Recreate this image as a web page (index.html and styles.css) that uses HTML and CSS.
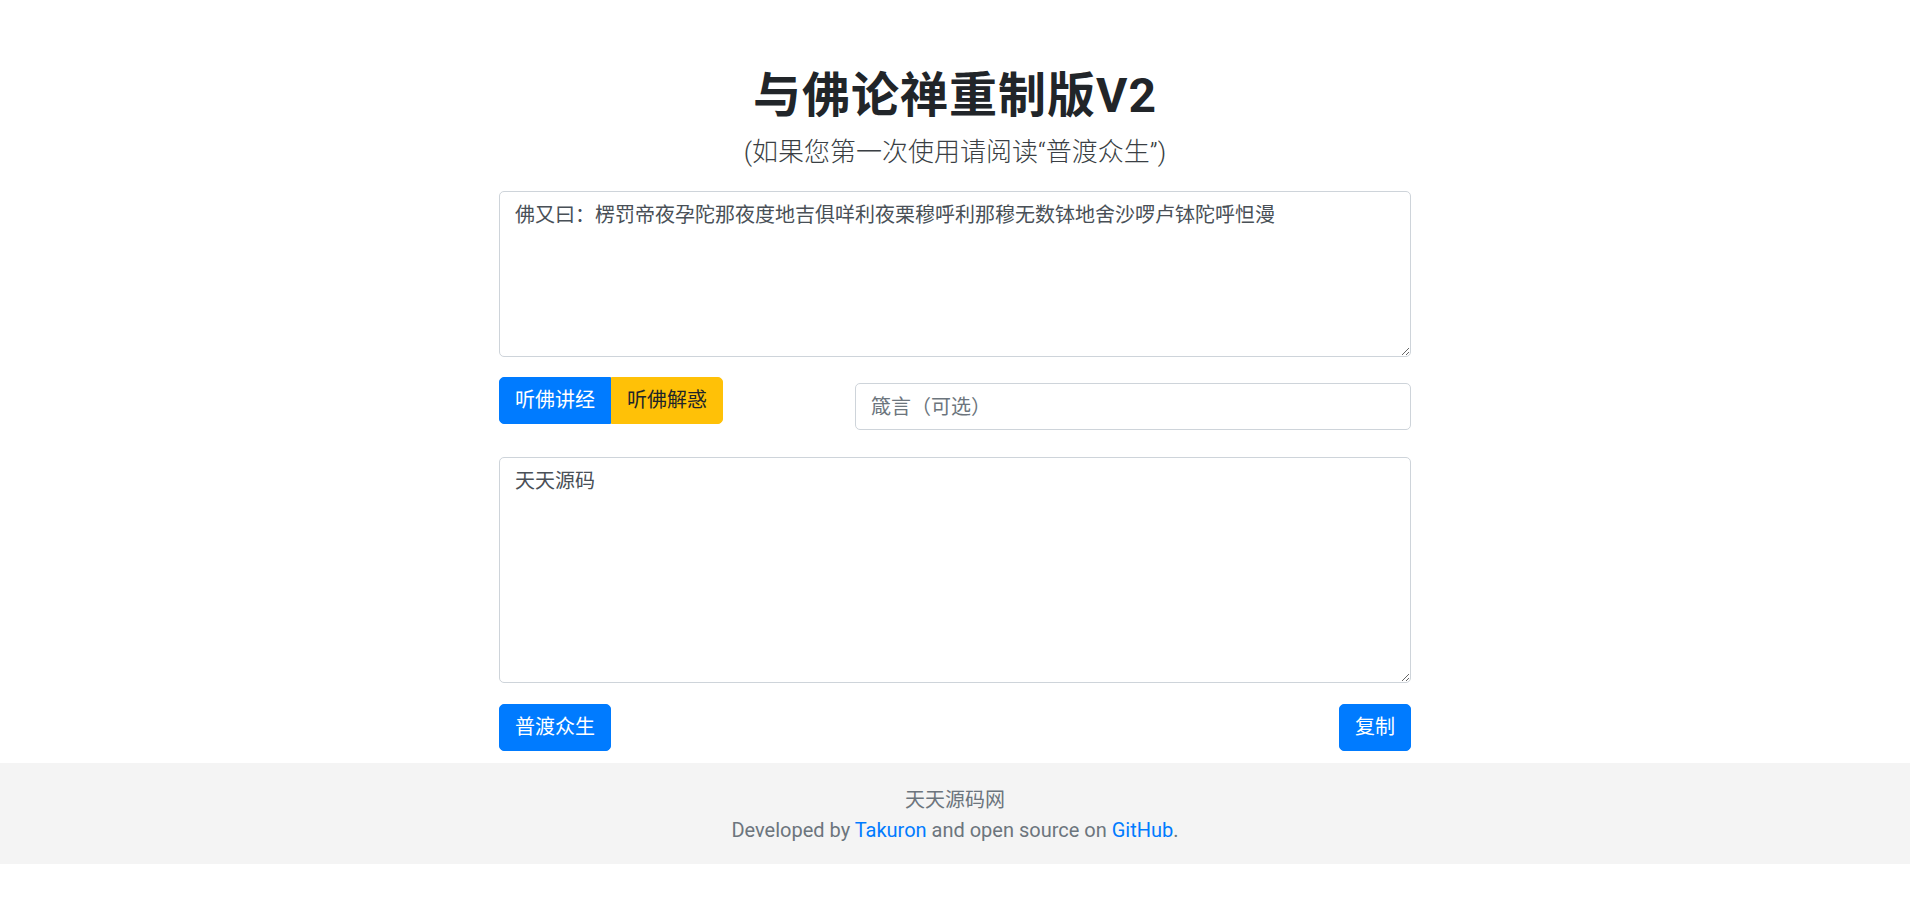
FILE: index.html
```html
<!DOCTYPE html>
<html lang="zh-CN">
<head>
<meta charset="utf-8">
<title>与佛论禅重制版V2</title>
<link rel="stylesheet" href="styles.css">
</head>
<body>
<main class="container">
  <h1 class="title">与佛论禅重制版V2</h1>
  <p class="lead">(如果您第一次使用请阅读“普渡众生”)</p>
  <textarea class="field field-top">佛又曰：楞罚帝夜孕陀那夜度地吉俱咩利夜栗穆呼利那穆无数钵地舍沙啰卢钵陀呼怛漫</textarea>
  <div class="mode-row">
    <div class="btn-group">
      <button class="btn btn-primary btn-left">听佛讲经</button>
      <button class="btn btn-warning btn-right">听佛解惑</button>
    </div>
    <input class="key-input" type="text" placeholder="箴言（可选）">
  </div>
  <textarea class="field field-bottom">天天源码</textarea>
  <div class="action-row">
    <button class="btn btn-primary">普渡众生</button>
    <button class="btn btn-primary">复制</button>
  </div>
</main>
<footer class="footer">
  <p class="footer-line">天天源码网</p>
  <p class="footer-line">Developed by <a href="#">Takuron</a> and open source on <a href="#">GitHub</a>.</p>
</footer>
</body>
</html>
```

FILE: styles.css
```css
* {
  box-sizing: border-box;
}

html, body {
  margin: 0;
  padding: 0;
  background: #ffffff;
}

body {
  font-family: Roboto, "Noto Sans CJK SC", sans-serif;
  font-size: 20px;
  line-height: 30px;
  color: #212529;
}

.container {
  width: 912px;
  margin: 0 auto;
  padding-top: 69px;
  display: flex;
  flex-direction: column;
}

.title {
  margin: 0;
  height: 53px;
  line-height: 53px;
  font-size: 48px;
  letter-spacing: 1px;
  font-weight: 700;
  text-align: center;
  color: #212529;
}

.lead {
  margin: 11px 0 0;
  height: 38px;
  line-height: 38px;
  font-size: 26px;
  font-weight: 300;
  text-align: center;
  color: #3a3f44;
}

.field {
  display: block;
  width: 100%;
  margin: 0;
  padding: 7.5px 15px;
  font-family: Roboto, "Noto Sans CJK SC", sans-serif;
  font-size: 20px;
  line-height: 30px;
  color: #495057;
  background: #ffffff;
  border: 1px solid #ced4da;
  border-radius: 5px;
  resize: vertical;
  outline: none;
}

.field-top {
  margin-top: 20px;
  height: 166px;
}

.field-bottom {
  margin-top: 27px;
  height: 226px;
}

.mode-row {
  margin-top: 20px;
  display: flex;
  justify-content: space-between;
  align-items: flex-start;
}

.btn-group {
  display: flex;
}

.btn {
  height: 47px;
  padding: 0 15px;
  font-family: Roboto, "Noto Sans CJK SC", sans-serif;
  font-size: 20px;
  line-height: 45px;
  font-weight: 400;
  border: 1px solid transparent;
  border-radius: 5px;
  cursor: pointer;
}

.btn-primary {
  color: #ffffff;
  background: #007bff;
  border-color: #007bff;
}

.btn-warning {
  color: #212529;
  background: #ffc107;
  border-color: #ffc107;
}

.btn-left {
  border-top-right-radius: 0;
  border-bottom-right-radius: 0;
}

.btn-right {
  border-top-left-radius: 0;
  border-bottom-left-radius: 0;
}

.key-input {
  margin-top: 6px;
  width: 556px;
  height: 47px;
  padding: 0 15px;
  font-family: Roboto, "Noto Sans CJK SC", sans-serif;
  font-size: 20px;
  color: #495057;
  background: #ffffff;
  border: 1px solid #ced4da;
  border-radius: 5px;
  outline: none;
}

.key-input::placeholder {
  color: #6c757d;
  opacity: 1;
}

.action-row {
  margin-top: 21px;
  display: flex;
  justify-content: space-between;
}

.footer {
  margin-top: 12px;
  padding: 22px 0 19px;
  background: #f4f4f4;
  text-align: center;
  color: #6c757d;
}

.footer-line {
  margin: 0;
  line-height: 30px;
}

.footer a {
  color: #007bff;
  text-decoration: none;
}
```
